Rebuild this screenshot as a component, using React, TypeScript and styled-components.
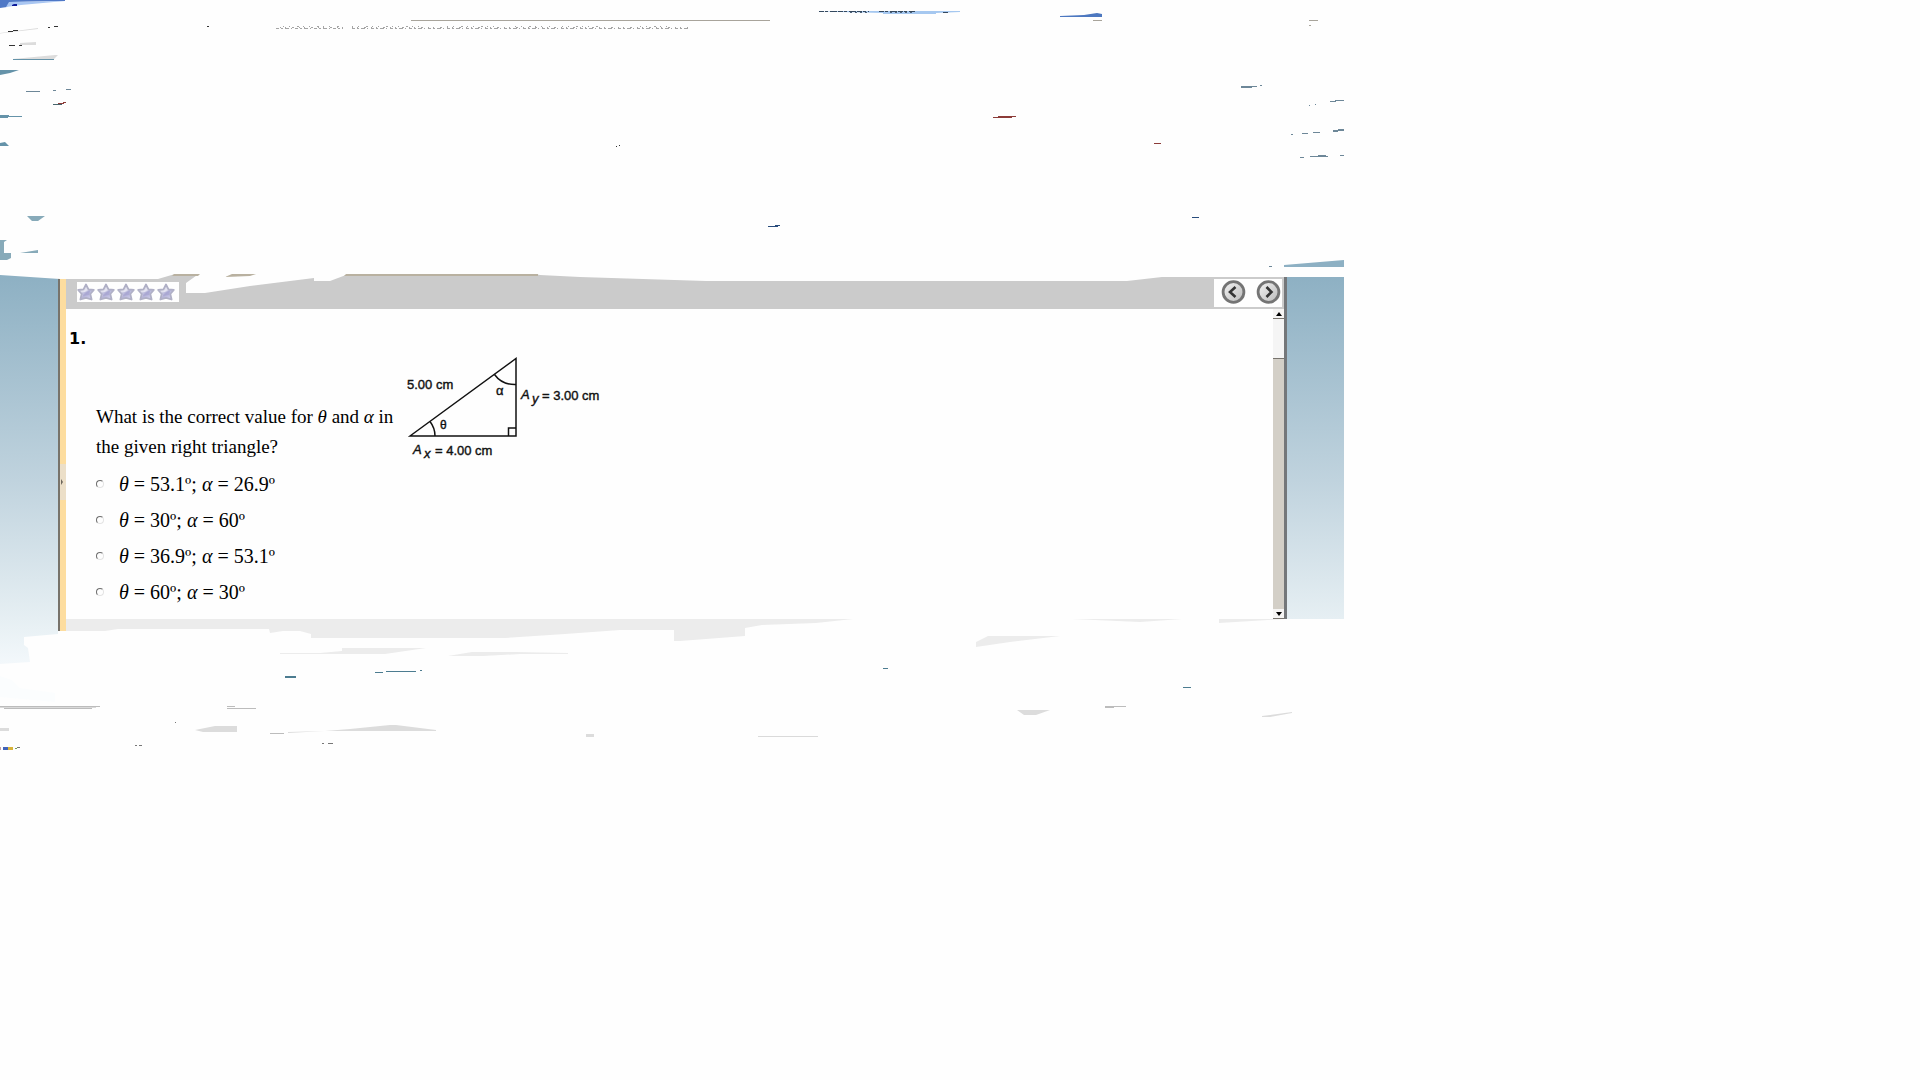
import React from "react";
import styled, { createGlobalStyle } from "styled-components";

const GlobalStyle = createGlobalStyle`
  body {
    margin: 0;
    background: #fefefe;
  }
`;

const Page = styled.main`
  width: 70%;
  display: flex;
  flex-direction: column;
  color: #000;
`;

const Scraps = styled.svg`
  display: block;
  width: 100%;
  height: auto;
  overflow: visible;
  position: relative;
  z-index: 1;
  pointer-events: none;
`;

const Viewer = styled.section`
  display: flex;
  align-items: stretch;
`;

const Backdrop = styled.div<{ $width: number }>`
  flex: 0 0 ${(p) => p.$width}px;
  background: linear-gradient(#8db0c3, #c0d3de 60%, #e6eff3);
`;

const SplitBar = styled.div`
  flex: 0 0 6px;
  display: flex;
  align-items: center;
  border-left: 2px solid #77736b;
  background: #fddd9f;
  padding-top: 70px;
`;

const SplitHandle = styled.button`
  width: 6px;
  height: 36px;
  padding: 0;
  border: 0;
  background: #ecdfc8;
  display: flex;
  align-items: center;
`;

const Panel = styled.div`
  flex: 1;
  min-width: 0;
  display: flex;
  flex-direction: column;
  border-right: 3px solid #74777a;
`;

const Toolbar = styled.header`
  display: flex;
  justify-content: space-between;
  align-items: flex-end;
  height: 35px;
  background: #cbcbcb;
`;

const Rating = styled.div`
  display: flex;
  align-items: center;
  justify-content: space-between;
  width: 98px;
  height: 20px;
  margin: 0 0 7px 11px;
  padding: 0 4px 0 0;
  background: #fefefe;
`;

const Pager = styled.nav`
  display: flex;
  gap: 10px;
  margin: 0 2px 2px 0;
  padding: 1px 1px 3px 7px;
  background: #fefefe;
`;

const PagerButton = styled.button`
  display: block;
  width: 25px;
  height: 24px;
  padding: 0;
  border: 0;
  background: none;
`;

const Body = styled.div`
  display: flex;
  flex: 1;
`;

const Question = styled.form`
  flex: 1;
  padding: 21px 0 9px 3px;
  font-family: "Liberation Serif", "Times New Roman", serif;
`;

const Number = styled.h1`
  margin: 0;
  font: bold 16px/18px "DejaVu Sans", Verdana, sans-serif;
`;

const Prompt = styled.div`
  display: flex;
  align-items: flex-start;
  margin: 2px 0 0 27px;
`;

const PromptText = styled.p`
  width: 307px;
  margin: 52px 0 0;
  font-size: 19px;
  line-height: 30px;
`;

const Figure = styled.svg`
  display: block;
  width: 210px;
  height: 110px;
  font-family: "Liberation Sans", Arial, sans-serif;
`;

const Choices = styled.div`
  display: flex;
  flex-direction: column;
  margin-left: 27px;
  padding-top: 4px;
`;

const Choice = styled.label`
  display: flex;
  align-items: center;
  gap: 15px;
  height: 36px;
  font-size: 20px;
  line-height: 36px;
`;

const Radio = styled.input`
  appearance: none;
  width: 8px;
  height: 8px;
  margin: 0;
  border: 1px solid #6d6d6d;
  border-right-color: #e4e4e4;
  border-bottom-color: #e4e4e4;
  border-radius: 50%;
`;

const Scrollbar = styled.div`
  flex: 0 0 11px;
  display: flex;
  flex-direction: column;
  background: #d3cfc7;
`;

const ScrollButton = styled.button`
  height: 10px;
  padding: 0;
  border: 0;
  border-bottom: 1px solid #77736d;
  background: #f6f5f4;
  display: flex;
  align-items: center;
  justify-content: center;
`;

const Thumb = styled.div`
  height: 39px;
  background: #f5f5f5;
  border-bottom: 1px solid #77736d;
`;

const Track = styled.div`
  flex: 1;
`;

const Star = () => (
  <svg width="18" height="19" viewBox="0 0 18 19" aria-hidden="true">
    <defs>
      <linearGradient id="star" x1="0" y1="0" x2="1" y2="1">
        <stop offset="0" stopColor="#c4c4d6" />
        <stop offset=".45" stopColor="#e6e6f2" />
        <stop offset=".55" stopColor="#b4b2d8" />
        <stop offset="1" stopColor="#d8d8f2" />
      </linearGradient>
    </defs>
    <path
      d="M9 1.5 L11.5 6.300 L16.8 7 L13.300 11 L14.6 16.500 L9 14.800 L3.4 16.500 L4.700 11 L1.2 7 L6.5 6.300 Z"
      fill="url(#star)"
      stroke="#b0b0c6"
      strokeWidth="1.8"
      strokeLinejoin="round"
    />
    <path d="M4.500 9.5 L13 8 L12 12 L6 13 Z" fill="#9794c8" opacity=".4" />
  </svg>
);

const Arrow = ({ next }: { next?: boolean }) => (
  <svg width="25" height="24" viewBox="0 0 25 24" aria-hidden="true">
    <defs>
      <linearGradient id="knob" x1="0" y1="0" x2="1" y2="1">
        <stop offset="0" stopColor="#f4f4f4" />
        <stop offset="1" stopColor="#b9b9b9" />
      </linearGradient>
    </defs>
    <circle cx="12.5" cy="12" r="10.4" fill="url(#knob)" stroke="#747474" strokeWidth="2.8" />
    <path
      d={next ? "M10.5 7 L15.5 12 L10.5 17" : "M14.5 7 L9 12 L14.5 17"}
      fill="none"
      stroke="#333"
      strokeWidth="2.6"
    />
  </svg>
);

const Triangle = () => (
  <Figure viewBox="403 350 210 110" role="img" aria-label="Right triangle">
    <g fill="none" stroke="#111" strokeWidth="1.5">
      <path d="M410 436 L516 358.500 V436 Z" />
      <path d="M430 421.500 Q435 428 435 436" />
      <path d="M494.500 374.500 Q502 385 516 384.500" />
      <path d="M508.500 436 V428 H516" />
    </g>
    <g fill="#111" stroke="#111" strokeWidth=".4" fontSize="13">
      <text x="407" y="389">5.00 cm</text>
      <text x="496" y="395">α</text>
      <text x="440" y="429" fontSize="12">θ</text>
      <text x="521" y="399" fontStyle="italic">A</text>
      <text x="532" y="403" fontStyle="italic">y</text>
      <text x="542" y="400">= 3.00 cm</text>
      <text x="413" y="454" fontStyle="italic">A</text>
      <text x="424" y="458" fontStyle="italic">x</text>
      <text x="435" y="455">= 4.00 cm</text>
    </g>
  </Figure>
);

const TopScraps = () => (
  <Scraps viewBox="0 0 1344 274" aria-hidden="true">
    <path fill="#4f78c6" d="M0 0H65V1L10 2L7 7L0 8Z" />
    <path fill="#a9c6f2" d="M9 2L65 1L21 5L6 7Z" />
    <path fill="#0b1a9a" d="M12 6V5L14 4H17V6Z" />
    <path fill="#dcdcdc" d="M0 33L38 28V29L0 33.500ZM20 43L36 42V45H20ZM13 59L55 55H58L54 59Z" />
    <g fill="none" stroke="#333" strokeWidth="1">
      <path d="M8 31.500H13M13 30.500H18M48 27.500H50M54 26.500H58M207 26.500H209M9 45.500H15M19 45.500H22M616 146.500H617M619 145.500H620" />
    </g>
    <path fill="none" stroke="#a8a49b" d="M411 20.500H770M1093 20.500H1102M1309 20.500H1318M1309 25.500H1311" />
    <g fill="none" stroke="#a4a4a4">
      <path strokeDasharray="3 2 2 2 4 2 1 3" d="M276 28.500H343M352 28.500H688" />
      <path strokeDasharray="1 5 1 7 2 4" d="M283 26.500H343M352 26.500H420M447 26.500H500M515 26.500H550M562 26.500H600M640 26.500H668" />
      <path strokeDasharray="1 4 1 6 2 5" d="M280 27.500H343M352 27.500H688" />
    </g>
    <path fill="#a6c8f0" d="M817 11H960V12L936 13V14H883V13L840 12Z" />
    <path fill="none" stroke="#34495f" strokeDasharray="5 1 3 2 7 1" d="M819 11.500H869M879 11.500H915M943 12.500H948" />
    <path fill="none" stroke="#4d6076" strokeDasharray="2 3" d="M850 12.500H868M890 12.500H912" />
    <path fill="#4d78c0" d="M1060 16L1084 15L1097 13L1102 14V17H1060Z" />
    <g fill="#6593a9">
      <path d="M13 59H54V60H13ZM0 70H19L10 73L0 75ZM0 115H9V116H22V117H8V118H0ZM0 143L5 142L9 146H0Z" />
    </g>
    <path fill="#87aab9" d="M27 216H45L38 221H32ZM0 240H7L4 242V253H11V258L7 260H0ZM20 253L38 250V253Z" />
    <path fill="none" stroke="#6d8798" d="M26 91.500H40M53 90.500H56M66 89.500H71M1241 87.500H1252M1241 86.500H1257M1260 85.500H1262M1330 101.500H1336M1335 100.500H1344M1291 134.500H1293M1302 133.500H1308M1313 132.500H1320M1333 131.500H1338M1333 130.500H1344M1338 129.500H1344M1300 157.500H1304M1310 156.500H1328M1318 155.500H1326M1340 155.500H1344M1309 105.500H1310M1315 104.500H1316M1269 266.500H1272" />
    <path fill="none" stroke="#8c3b38" d="M993 117.500H1012M998 116.500H1016M1154 143.500H1161M58 103.500H64M63 102.500H66" />
    <path fill="none" stroke="#48656c" d="M53 104.500H62" />
    <path fill="none" stroke="#294c7c" d="M768 226.500H778M775 225.500H780M1192 217.500H1199" />
    <path fill="#8db0c3" d="M1284 265L1344 260V267H1284Z" />
    <path fill="#fefefe" d="M0 273H175V274L158 279H60L45 278L0 275Z" />
    <path fill="#fefefe" d="M200 273H350L346 275L330 281H314V278L250 286L205 293H186V283Z" />
    <path fill="#fefefe" d="M530 273H1344V277H1162L1127 281H706L580 277L540 275Z" />
    <path fill="#b9b1a0" d="M174 274H200L198 276H172ZM225 277L232 274H256L250 276ZM346 274H538V276H344Z" />
  </Scraps>
);

const BottomScraps = () => (
  <Scraps viewBox="0 619 1344 134" aria-hidden="true">
    <defs>
      <linearGradient id="fade" x1="0" y1="0" x2="0" y2="1">
        <stop offset="0" stopColor="#e6eff3" />
        <stop offset="1" stopColor="#f3f8fb" />
      </linearGradient>
    </defs>
    <path fill="url(#fade)" d="M0 619H58V634L24 637V645L28 648L30 662L0 664Z" />
    <path fill="#fbfdfe" d="M0 676L12 680L20 688L55 693V702L0 697Z" />
    <path fill="#77736b" d="M58 619H60V631H58Z" />
    <path fill="#fddd9f" d="M60 619H66V631H60Z" />
    <path
      fill="#ececec"
      d="M66 619H853L816 623L762 625L745 628V636L680 641H674V630H620L565 634L505 638H311V634L300 631H283L270 633L269 629H118L105 631H66Z"
    />
    <path
      fill="#ececec"
      d="M342 648H426L385 654H280V653L320 653L342 651ZM448 656L472 652H515L568 653V654H520L483 656ZM1072 619H1182L1140 622ZM1219 619H1285L1219 623ZM976 647V642L988 636H1060L1010 642Z"
    />
    <path
      fill="#dcdcdc"
      d="M195 730L215 726H237V732H203ZM288 733V732L325 731L350 729L390 725H396L436 730V731L325 731ZM1017 710H1050L1036 715H1024ZM586 734H594V737H586ZM0 728H9V731H0ZM1262 717V716L1292 712V713L1270 717Z"
    />
    <path fill="none" stroke="#bcbcbc" d="M0 706.500H100M4 708.500H92M227 706.500H235M227 708.500H256M270 733.500H284M1105 706.500H1126M1105 707.500H1114" />
    <path fill="none" stroke="#dadada" d="M0 707.500H96M758 736.500H818" />
    <path fill="none" stroke="#4c7c90" d="M285 676.500H296M285 677.500H296M375 672.500H383M386 671.500H416M420 670.500H422M883 668.500H888M1183 687.500H1191" />
    <path fill="none" stroke="#777" d="M175 722.500H176M135 745.500H137M139 745.500H142M322 743.500H324M328 743.500H333M17 747.500H20" />
    <path fill="#4163b8" d="M3 747H8V750H3Z" />
    <path fill="#d8b33a" d="M8 747H13V750H8Z" />
    <path fill="#70a05a" d="M15 748H17V749H15Z" />
    <path fill="#c9a0a0" d="M0 747H1V750H0Z" />
  </Scraps>
);

const choices = [
  { theta: "53.1º", alpha: "26.9º" },
  { theta: "30º", alpha: "60º" },
  { theta: "36.9º", alpha: "53.1º" },
  { theta: "60º", alpha: "30º" },
];

export default function App() {
  return (
    <>
      <GlobalStyle />
      <Page>
        <TopScraps />
        <Viewer>
          <Backdrop $width={58} />
          <SplitBar>
            <SplitHandle type="button" aria-label="Toggle side panel">
              <svg width="4" height="8" viewBox="0 0 4 8" aria-hidden="true">
                <path d="M1 1L3 4L1 7Z" fill="#6d675c" />
              </svg>
            </SplitHandle>
          </SplitBar>
          <Panel>
            <Toolbar>
              <Rating role="img" aria-label="Difficulty rating">
                {[1, 2, 3, 4, 5].map((n) => (
                  <Star key={n} />
                ))}
              </Rating>
              <Pager aria-label="Questions">
                <PagerButton type="button" aria-label="Previous question">
                  <Arrow />
                </PagerButton>
                <PagerButton type="button" aria-label="Next question">
                  <Arrow next />
                </PagerButton>
              </Pager>
            </Toolbar>
            <Body>
              <Question>
                <Number>1.</Number>
                <Prompt>
                  <PromptText id="prompt">
                    What is the correct value for <i>θ</i> and <i>α</i> in
                    <br />
                    the given right triangle?
                  </PromptText>
                  <Triangle />
                </Prompt>
                <Choices role="radiogroup" aria-labelledby="prompt">
                  {choices.map(({ theta, alpha }) => (
                    <Choice key={theta}>
                      <Radio type="radio" name="answer" value={theta} />
                      <span>
                        <i>θ</i> = {theta}; <i>α</i> = {alpha}
                      </span>
                    </Choice>
                  ))}
                </Choices>
              </Question>
              <Scrollbar>
                <ScrollButton type="button" aria-label="Scroll up">
                  <svg width="6" height="4" viewBox="0 0 6 4" aria-hidden="true">
                    <path d="M0 4L3 0L6 4Z" fill="#000" />
                  </svg>
                </ScrollButton>
                <Thumb />
                <Track />
                <ScrollButton type="button" aria-label="Scroll down">
                  <svg width="6" height="4" viewBox="0 0 6 4" aria-hidden="true">
                    <path d="M0 0L3 4L6 0Z" fill="#000" />
                  </svg>
                </ScrollButton>
              </Scrollbar>
            </Body>
          </Panel>
          <Backdrop $width={57} />
        </Viewer>
        <BottomScraps />
      </Page>
    </>
  );
}
